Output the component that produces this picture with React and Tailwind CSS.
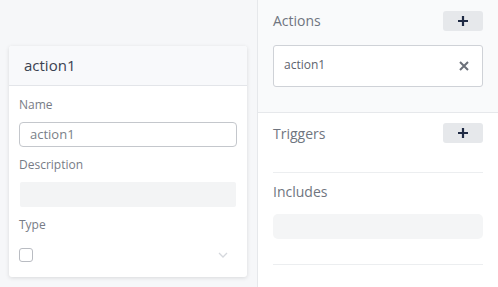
import React from "react";

const Plus = () => (
  <svg width="10" height="10" viewBox="0 0 10 10">
    <path d="M5 1v8M1 5h8" stroke="#1f2a44" strokeWidth="2.2" strokeLinecap="square" />
  </svg>
);

const XIcon = () => (
  <svg width="10" height="10" viewBox="0 0 10 10">
    <path d="M1 1l8 8M9 1l-8 8" stroke="#6b7079" strokeWidth="2" />
  </svg>
);

const Chevron = () => (
  <svg width="10" height="6" viewBox="0 0 10 6">
    <path d="M1 1l4 4 4-4" stroke="#d5d8dd" strokeWidth="1.3" fill="none" />
  </svg>
);

export default function App() {
  return (
    <div
      className="flex w-[498px] h-[287px] overflow-hidden bg-[#f6f7f9]"
      style={{ fontFamily: '"Open Sans", "Noto Sans", sans-serif' }}
    >
      {/* Left canvas */}
      <div className="w-[257px] shrink-0 pl-[9px] pt-[46px]">
        <div className="w-[238px] h-[231px] bg-white rounded-[3px] shadow-[0_1px_4px_rgba(0,0,0,0.12)] flex flex-col">
          <div className="h-[40px] bg-[#f8f9fb] border-b border-[#e3e5e9] flex items-center px-[15px] rounded-t-[3px]">
            <span className="text-[15px] text-[#3b4250]">action1</span>
          </div>
          <div className="px-[10px] flex flex-col">
            <div className="mt-[11px] text-[12px] leading-[16px] text-[#777c86]">Name</div>
            <div className="mt-[9px] h-[25px] border border-[#c4c7cc] rounded-[4px] flex items-center px-[10px] text-[13px] text-[#7a7f88]">
              action1
            </div>
            <div className="mt-[10px] text-[12px] leading-[16px] text-[#777c86]">Description</div>
            <div className="mt-[9px] mx-[1px] h-[25px] bg-[#f3f4f5] rounded-[2px]" />
            <div className="mt-[10px] text-[12px] leading-[16px] text-[#777c86]">Type</div>
            <div className="mt-[15px] flex items-center justify-between pr-[9px]">
              <div className="w-[14px] h-[14px] border border-[#b9bcc2] rounded-[3px]" />
              <Chevron />
            </div>
          </div>
        </div>
      </div>

      {/* Right panel */}
      <div className="flex-1 bg-white border-l border-[#e6e8eb] flex flex-col">
        <div className="bg-[#f9fafb] border-b border-[#e6e8eb] px-[15px] pt-[10px] h-[113px]">
          <div className="flex items-center justify-between h-[21px]">
            <span className="text-[14px] text-[#6f7580]">Actions</span>
            <div className="w-[40px] h-[20px] bg-[#e6e8eb] rounded-[3px] flex items-center justify-center">
              <Plus />
            </div>
          </div>
          <div className="mt-[14px] h-[42px] bg-white border border-[#cfd2d7] rounded-[3px] flex items-center justify-between pl-[10px] pr-[13px]">
            <span className="text-[12px] text-[#5d636d] -mt-[3px]">action1</span>
            <XIcon />
          </div>
        </div>
        <div className="px-[15px] pt-[10px]">
          <div className="flex items-center justify-between h-[20px]">
            <span className="text-[14px] text-[#6f7580]">Triggers</span>
            <div className="w-[40px] h-[20px] bg-[#e6e8eb] rounded-[3px] flex items-center justify-center">
              <Plus />
            </div>
          </div>
          <div className="mt-[29px] border-t border-[#eceef0]" />
          <div className="mt-[9px] text-[14px] leading-[20px] text-[#6f7580]">Includes</div>
          <div className="mt-[12px] h-[25px] bg-[#f4f5f6] rounded-[5px]" />
          <div className="mt-[25px] border-t border-[#eceef0]" />
        </div>
      </div>
    </div>
  );
}
